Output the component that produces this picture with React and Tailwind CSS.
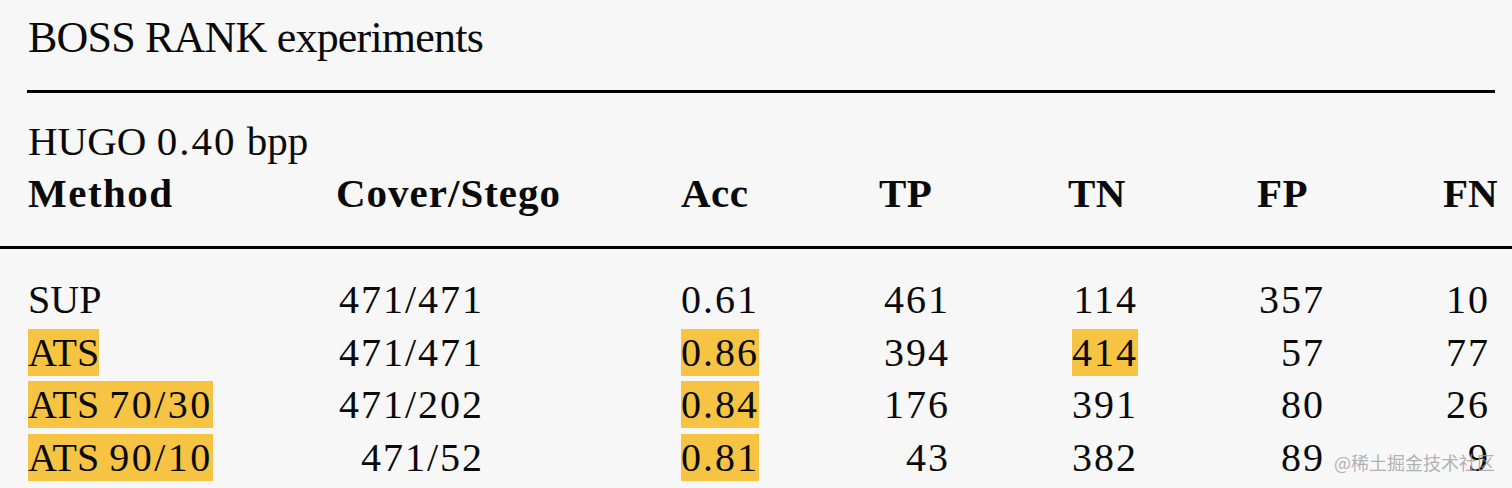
import React from "react";

const rows = [
  { method: "SUP", num: "", hl: false, cs: "471/471", acc: "0.61", accHl: false, tp: "461", tn: "114", tnHl: false, fp: "357", fn: "10" },
  { method: "ATS", num: "", hl: true, cs: "471/471", acc: "0.86", accHl: true, tp: "394", tn: "414", tnHl: true, fp: "57", fn: "77" },
  { method: "ATS ", num: "70/30", hl: true, cs: "471/202", acc: "0.84", accHl: true, tp: "176", tn: "391", tnHl: false, fp: "80", fn: "26" },
  { method: "ATS ", num: "90/10", hl: true, cs: "471/52", acc: "0.81", accHl: true, tp: "43", tn: "382", tnHl: false, fp: "89", fn: "9" },
];

const cols = "grid grid-cols-[308px_345px_198px_189px_189px_186px_1fr] pl-[28px]";

const Mark = ({ on, children }) => (
  <span className={`inline-block h-[47px] leading-[47px] ${on ? "bg-[#f6c343]" : ""}`}>
    {children}
  </span>
);

const Num = ({ w, on, children }) => (
  <div className={`${w} text-right`}>
    <Mark on={on}>
      <span className="tracking-[2px]">{children}</span>
    </Mark>
  </div>
);

export default function App() {
  return (
    <div className="relative h-[488px] w-[1512px] overflow-hidden bg-[#f7f7f7] font-['Liberation_Serif',serif] text-[#0a0a0a]">
      <div className="pl-[28px] pr-[17px] pt-[8px]">
        <h2 className="text-[44px] leading-[60px] tracking-[-0.8px]">BOSS RANK experiments</h2>
        <div className="-ml-px mt-[22px] h-[3px] bg-black" />
      </div>

      <div className="mt-[24px] pl-[28px] text-[41px] leading-[48px]">
        HUGO <span className="tracking-[2px]">0.40</span> bpp
      </div>

      <div className={`${cols} mt-[4px] text-[41px] font-bold leading-[48px] tracking-[0.5px]`}>
        <div className="tracking-[1.5px]">Method</div>
        <div className="tracking-[1px]">Cover/Stego</div>
        <div>Acc</div>
        <div>TP</div>
        <div>TN</div>
        <div>FP</div>
        <div className="tracking-normal">FN</div>
      </div>

      <div className="mt-[29px] h-[3px] w-full bg-black" />

      <div className="mt-[27px] text-[40px]">
        {rows.map((r, i) => (
          <div key={i} className={`${cols} h-[52.5px] leading-[47px]`}>
            <div>
              <Mark on={r.hl}>
                {r.method}
                {r.num && <span className="tracking-[2.5px]">{r.num}</span>}
              </Mark>
            </div>
            <Num w="w-[148px]">{r.cs}</Num>
            <div>
              <Mark on={r.accHl}>
                <span className="tracking-[2px]">{r.acc}</span>
              </Mark>
            </div>
            <Num w="w-[71px]">{r.tp}</Num>
            <Num w="w-[70px]" on={r.tnHl}>{r.tn}</Num>
            <Num w="w-[68px]">{r.fp}</Num>
            <Num w="w-[47px]">{r.fn}</Num>
          </div>
        ))}
      </div>

      <div className="absolute bottom-[16px] right-[17px] font-['Noto_Sans_CJK_SC',sans-serif] text-[18px] leading-[20px] text-[#9e9e9e]/80">
        @稀土掘金技术社区
      </div>
    </div>
  );
}
